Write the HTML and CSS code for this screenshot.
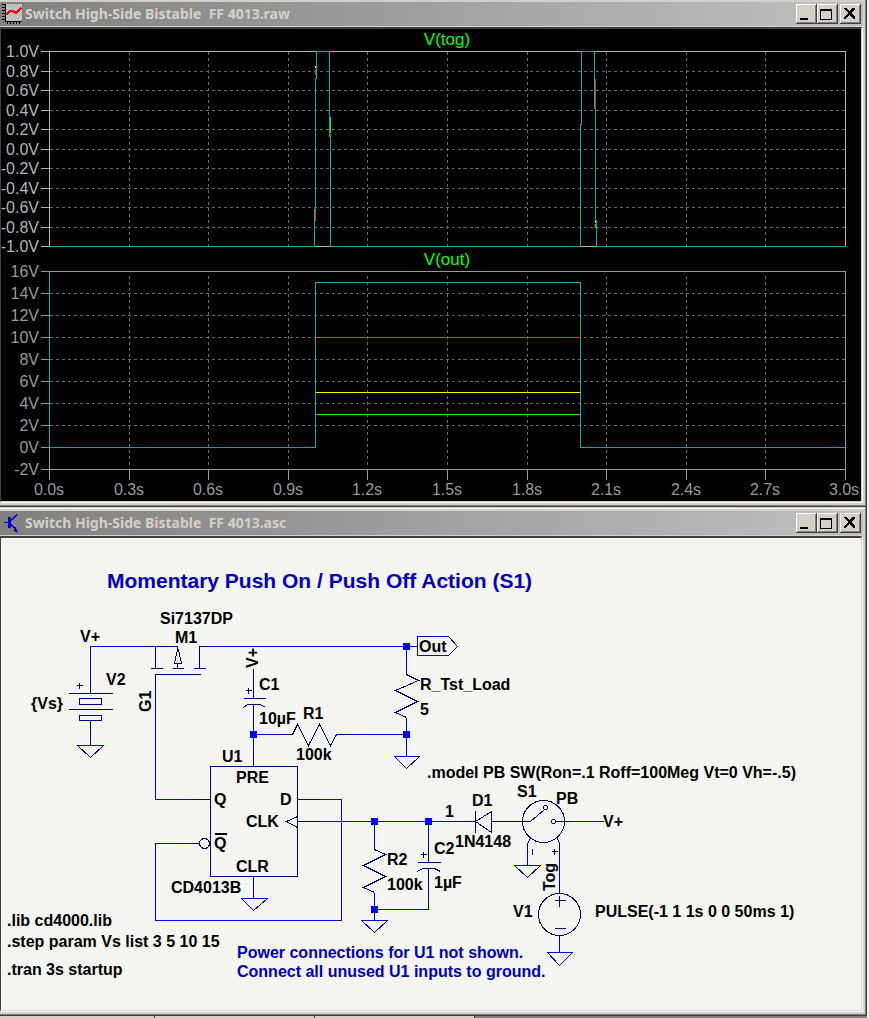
FILE: index.html
```html
<!DOCTYPE html>
<html lang="en">
<head>
<meta charset="utf-8">
<title>Switch High-Side Bistable FF 4013</title>
<link rel="stylesheet" href="styles.css">
</head>
<body>
<main class="workspace">
  <section class="window">
    <header class="titlebar">
      <svg class="app-icon" viewBox="0 0 20 20" aria-hidden="true">
        <rect x="3" y="0" width="17" height="17" fill="#c0c0c0"/>
        <path d="M3 0h1v17h16v1H3zM0 0h3v1H0zM0 3h3v1H0zM0 6h3v1H0zM0 9h3v1H0zM0 12h3v1H0zM0 15h3v1H0zM5 18h1v2H5zM8 18h1v2H8zM11 18h1v2h-1zM14 18h1v2h-1zM17 18h1v2h-1z" fill="#000"/>
        <path d="M4 11L8 7H11L14 9L19 4" fill="none" stroke="#f00" stroke-width="2"/>
      </svg>
      <h1 class="title">Switch High-Side Bistable&nbsp; FF 4013.raw</h1>
      <div class="controls">
        <button class="ctl" aria-label="Minimize"><svg viewBox="0 0 17 16"><path d="M2 12h8v2H2z"/></svg></button>
        <button class="ctl" aria-label="Maximize"><svg viewBox="0 0 17 16"><path fill-rule="evenodd" d="M1 3h12v11H1zM2 5v8h10V5z"/></svg></button>
        <button class="ctl close" aria-label="Close"><svg viewBox="0 0 17 16"><path d="M2 2h2l3 3 4-3h2v1L9 7l4 4v2h-2L7 9l-3 4H2v-2l4-4-4-4z"/></svg></button>
      </div>
    </header>
    <div class="client plot-client">
      <svg class="canvas" viewBox="1 29 860 472" role="img" aria-label="Waveform plots">
        <g class="lines" transform="translate(.5 .5)">
          <path class="grid" d="M49 71H845M49 90H845M49 110H845M49 129H845M49 149H845M49 168H845M49 188H845M49 207H845M49 227H845"/>
          <path class="grid" d="M129 51V246M208 51V246M288 51V246M367 51V246M447 51V246M527 51V246M606 51V246M686 51V246M765 51V246"/>
          <path class="axis" d="M49 51H845V246H49ZM40 51H49M40 71H49M40 90H49M40 110H49M40 129H49M40 149H49M40 168H49M40 188H49M40 207H49M40 227H49M40 246H49"/>
          <path class="trace" d="M49 246H314V209H315V78H316V51H329V136H330V246M580 246V124H581V51H594V108H595V220H596V246H845M330 246H580"/>
          <path class="yellow" d="M315 65V67M595 220V222"/>
          <path class="red" d="M315 68V74M315 209V220M330 133V136M595 78V108"/>
          <path class="green" d="M316 75V77M330 116V132M595 223V227"/>

          <path class="grid" d="M49 293H845M49 315H845M49 337H845M49 359H845M49 381H845M49 403H845M49 425H845"/>
          <path class="grid" d="M129 275V466M208 275V466M288 275V466M367 275V466M447 275V466M527 275V466M606 275V466M686 275V466M765 275V466"/>
          <path class="axis dim" d="M49 271H845V469H49ZM40 271H49M40 293H49M40 315H49M40 337H49M40 359H49M40 381H49M40 403H49M40 425H49M40 447H49M40 469H49M49 469V479M129 469V479M208 469V479M288 469V479M367 469V479M447 469V479M527 469V479M606 469V479M686 469V479M765 469V479M845 469V479"/>
          <path class="green" d="M315 414H580"/>
          <path class="yellow" d="M315 392H580"/>
          <path class="red" d="M315 337H580"/>
          <path class="trace" d="M49 271V447H315V282H580V447H845"/>
        </g>
        <g class="plot-title">
          <text x="447" y="45">V(tog)</text>
          <text x="447" y="265">V(out)</text>
        </g>
        <g class="ylabel">
          <text x="39" y="57">1.0V</text><text x="39" y="77">0.8V</text><text x="39" y="96">0.6V</text><text x="39" y="116">0.4V</text><text x="39" y="135">0.2V</text><text x="39" y="155">0.0V</text><text x="39" y="174">-0.2V</text><text x="39" y="194">-0.4V</text><text x="39" y="213">-0.6V</text><text x="39" y="233">-0.8V</text><text x="39" y="252">-1.0V</text>
        </g>
        <g class="ylabel dim">
          <text x="39" y="277">16V</text><text x="39" y="299">14V</text><text x="39" y="321">12V</text><text x="39" y="343">10V</text><text x="39" y="365">8V</text><text x="39" y="387">6V</text><text x="39" y="409">4V</text><text x="39" y="431">2V</text><text x="39" y="453">0V</text><text x="39" y="475">-2V</text>
        </g>
        <g class="xlabel">
          <text x="49" y="495">0.0s</text><text x="129" y="495">0.3s</text><text x="208" y="495">0.6s</text><text x="288" y="495">0.9s</text><text x="367" y="495">1.2s</text><text x="447" y="495">1.5s</text><text x="527" y="495">1.8s</text><text x="606" y="495">2.1s</text><text x="686" y="495">2.4s</text><text x="765" y="495">2.7s</text><text x="844" y="495">3.0s</text>
        </g>
      </svg>
    </div>
  </section>

  <section class="window raised">
    <header class="titlebar">
      <svg class="app-icon" viewBox="0 0 20 20" aria-hidden="true">
        <path d="M6 4h3v11H6zM2 9h4v1H2zM9 6l5-5h1v1l-6 6zM9 11l3 3 1-1 2 4 1 3-4-2v-2l-3-3z" fill="#0000d0"/>
        <path d="M10 17h2v1h-2z" fill="#808000"/>
      </svg>
      <h2 class="title">Switch High-Side Bistable&nbsp; FF 4013.asc</h2>
      <div class="controls">
        <button class="ctl" aria-label="Minimize"><svg viewBox="0 0 17 16"><path d="M2 12h8v2H2z"/></svg></button>
        <button class="ctl" aria-label="Maximize"><svg viewBox="0 0 17 16"><path fill-rule="evenodd" d="M1 3h12v11H1zM2 5v8h10V5z"/></svg></button>
        <button class="ctl close" aria-label="Close"><svg viewBox="0 0 17 16"><path d="M2 2h2l3 3 4-3h2v1L9 7l4 4v2h-2L7 9l-3 4H2v-2l4-4-4-4z"/></svg></button>
      </div>
    </header>
    <div class="client sheet-client">
      <svg class="canvas" viewBox="1 538 860 472" role="img" aria-label="Circuit schematic">
        <g class="lines" transform="translate(.5 .5)">
          <!-- wires, grounds and the output tag -->
          <path class="wire" d="M90 680V646H145M210 646H417M155 690V799H190M406 646V674M406 717V756M253 668V682M253 722V750M253 734H280M350 734H406M190 843H155V920H341V799H319M319 821H460M374 821V849M374 892V920M428 821V849M428 882V909H374M510 821H491M571 821H603M527 850V865M559 850V880M559 940V952M90 735V745M253 890V898"/>
          <path class="wire" d="M417 636H448L457 646L448 655H417Z"/>
          <path class="wire" d="M77 745H103L90 757ZM394 756H419L406 768ZM241 898H267L253 910ZM361 920H387L374 932ZM514 865H540L527 877ZM547 952H572L559 965Z"/>
          <!-- supply V2 -->
          <path class="part" d="M90 680V693M68 693H112M79 698H101V704H79ZM68 709H112M79 715H101V720H79ZM90 720V735M76 685H82M79 682V688"/>
          <!-- transistor M1 -->
          <path class="part" d="M145 646H177V649M155 646V668M150 668H162M172 668H183M193 668H205M199 668V646H210M155 690V674H200M177 649L174 663H181L178 649M177 663V668"/>
          <!-- C1, R1, load resistor -->
          <path class="part" d="M253 682V698M243 698H265M243 707L247 704H260L265 707M253 704V722M245 690H251M248 687V693M280 734H292L297 724L308 745L319 724L330 745L336 734H350"/>
          <path class="part" d="M406 674L418 680L395 690L417 701L395 712L406 717"/>
          <!-- flip-flop U1 -->
          <path class="part" d="M253 750V766M210 766H297V876H210ZM190 799H210M297 799H319M297 816L286 821L297 827M297 821H319M253 876V890M190 843H199"/>
          <circle class="part" cx="204" cy="843" r="5"/>
          <path class="bar" d="M214 833H226"/>
          <!-- R2, C2, D1 -->
          <path class="part" d="M374 849L385 854L363 865L385 876L363 887L374 892M428 849V862M417 862H440M417 871L422 868H434L440 871M428 868V882M420 854H426M423 851V857M460 821H475M475 810V832M475 821L491 811V832ZM491 821H530"/>
          <!-- switch S1 and source V1 -->
          <circle class="part" cx="543" cy="821" r="21"/>
          <circle class="part" cx="545" cy="807" r="2"/>
          <circle class="part" cx="553" cy="821" r="2"/>
          <path class="part" d="M530 821L544 809M555 821H571M530 838L527 843V850M557 838L559 843V850M532 848V854M551 851H557M554 848V854M559 880V893"/>
          <circle class="part" cx="559" cy="914" r="21"/>
          <path class="part" d="M554 900H565M559 895V906M554 928H565M559 935V940"/>
        </g>
        <g class="node">
          <rect x="403" y="643" width="7" height="7"/><rect x="403" y="731" width="7" height="7"/><rect x="250" y="731" width="7" height="7"/><rect x="371" y="818" width="7" height="7"/><rect x="425" y="818" width="7" height="7"/><rect x="371" y="906" width="7" height="7"/>
        </g>
        <g class="label">
          <text x="80" y="642">V+</text>
          <text x="106" y="685">V2</text>
          <text x="31" y="709">{Vs}</text>
          <text x="160" y="624">Si7137DP</text>
          <text x="175" y="643">M1</text>
          <text transform="translate(151 712) rotate(-90)">G1</text>
          <text transform="translate(258 668) rotate(-90)">V+</text>
          <text x="259" y="690">C1</text>
          <text x="259" y="724">10µF</text>
          <text x="303" y="719">R1</text>
          <text x="296" y="760">100k</text>
          <text x="419" y="652">Out</text>
          <text x="420" y="690">R_Tst_Load</text>
          <text x="420" y="715">5</text>
          <text x="222" y="762">U1</text>
          <text x="236" y="783">PRE</text>
          <text x="214" y="805">Q</text>
          <text x="280" y="805">D</text>
          <text x="246" y="827">CLK</text>
          <text x="214" y="849">Q</text>
          <text x="236" y="872">CLR</text>
          <text x="171" y="893">CD4013B</text>
          <text x="387" y="865">R2</text>
          <text x="387" y="890">100k</text>
          <text x="434" y="854">C2</text>
          <text x="434" y="888">1µF</text>
          <text x="445" y="817">1</text>
          <text x="472" y="806">D1</text>
          <text x="455" y="847">1N4148</text>
          <text x="517" y="797">S1</text>
          <text x="556" y="804">PB</text>
          <text x="603" y="827">V+</text>
          <text transform="translate(555 891) rotate(-90)">Tog</text>
          <text x="513" y="917">V1</text>
          <text x="595" y="917">PULSE(-1 1 1s 0 0 50ms 1)</text>
          <text x="427" y="778">.model PB SW(Ron=.1 Roff=100Meg Vt=0 Vh=-.5)</text>
          <text x="7" y="926">.lib cd4000.lib</text>
          <text x="7" y="947">.step param Vs list 3 5 10 15</text>
          <text x="7" y="975">.tran 3s startup</text>
        </g>
        <g class="label note">
          <text class="heading" x="107" y="588">Momentary Push On / Push Off Action (S1)</text>
          <text x="237" y="958">Power connections for U1 not shown.</text>
          <text x="237" y="977">Connect all unused U1 inputs to ground.</text>
        </g>
      </svg>
    </div>
  </section>
  <div class="statusbar"><span class="pane"></span><span class="pane"></span><span class="pane"></span></div>
</main>
</body>
</html>
```
FILE: styles.css
```css
* { box-sizing: border-box; }

body {
  margin: 0;
  background: #808080;
  font-family: "Liberation Sans", Arial, sans-serif;
}

.workspace {
  display: flex;
  flex-direction: column;
  padding-right: 2px;
  background: linear-gradient(#f4f2ee, #f4f2ee) right / 2px 100% no-repeat;
}

.window {
  display: flex;
  flex-direction: column;
  padding: 2px 3px 3px 0;
  background: #d4d0c8;
  border-right: 1px solid #404040;
  border-bottom: 1px solid #404040;
  box-shadow: inset -1px -1px #808080;
}

.raised {
  padding-top: 4px;
  background: linear-gradient(#fff, #fff) 0 1px / 100% 1px no-repeat #d4d0c8;
}

.titlebar {
  display: flex;
  align-items: center;
  height: 24px;
  padding: 0 2px;
  margin-bottom: 1px;
  background: linear-gradient(90deg, #808080, #c0c0c0);
}

.app-icon { width: 20px; height: 20px; flex: none; shape-rendering: crispEdges; }

.title {
  flex: 1;
  margin: 0 0 0 3px;
  color: #d4d0c8;
  font: bold 14px/20px "Noto Sans", "DejaVu Sans Condensed", sans-serif;
  white-space: nowrap;
}

.controls { display: flex; }

.ctl {
  width: 21px;
  height: 20px;
  padding: 0;
  border: 0;
  background: #d4d0c8;
  box-shadow: inset -1px -1px #404040, inset 1px 1px #fff, inset -2px -2px #808080;
  display: grid;
  place-items: center;
}

.ctl svg { width: 17px; height: 16px; shape-rendering: crispEdges; }
.close { margin-left: 2px; }

.client {
  border-top: 2px solid #404040;
  border-left: 1px solid #404040;
  border-right: 1px solid #d4d0c8;
  border-bottom: 1px solid #d4d0c8;
  margin-right: 1px;
  margin-bottom: 1px;
  box-shadow: 1px 1px #fff;
}

.plot-client { background: #000; }
.sheet-client { background: #f4f4f0; }

.canvas { display: block; width: 100%; height: auto; }
.lines { shape-rendering: crispEdges; fill: none; stroke-width: 1; }

.grid { stroke: #686868; stroke-dasharray: 3 3; }
.axis { stroke: #b4b4b4; }
.axis.dim { stroke: #989898; }
.trace { stroke: #00acac; }
.green { stroke: #00ff00; }
.yellow { stroke: #ffff00; }
.red { stroke: #e03838; }

.plot-title { fill: #00ff00; font-size: 17px; text-anchor: middle; }
.ylabel { fill: #b4b4b4; font-size: 16px; text-anchor: end; }
.ylabel.dim { fill: #989898; }
.xlabel { fill: #989898; font-size: 16px; text-anchor: middle; }

.wire { stroke: #0000e8; }
.part { stroke: #000090; }
.bar { stroke: #000; stroke-width: 2; }
.node { fill: #0000ff; }
.label { fill: #000; font-size: 16px; font-weight: bold; }
.note { fill: #0000c4; }
.heading { font-size: 21px; }

.statusbar { display: flex; height: 2px; background: #808080; }
.pane { width: 160px; background: #d4d0c8; border-right: 1px solid #404040; }
.pane:first-child { width: 155px; }
```
